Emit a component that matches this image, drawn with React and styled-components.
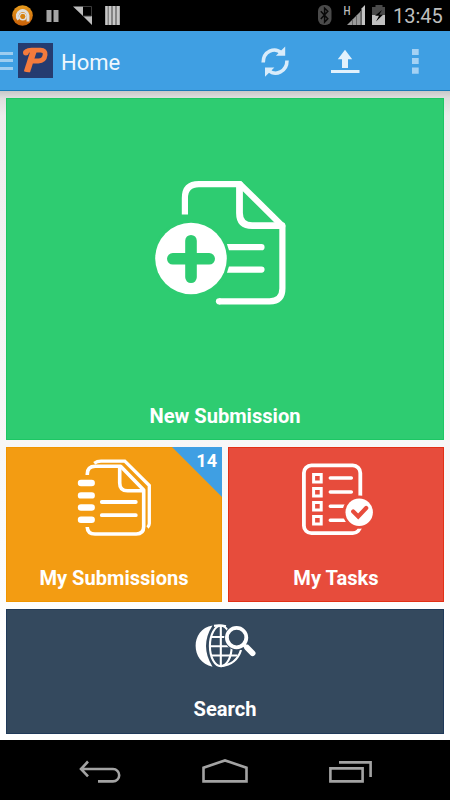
import React from 'react';
import styled, { createGlobalStyle } from 'styled-components';

const GlobalStyle = createGlobalStyle`
  * {
    box-sizing: border-box;
  }

  body {
    margin: 0;
    background: #000;
    font-family: Roboto, 'Noto Sans', sans-serif;
  }
`;

const Screen = styled.div`
  width: 450px;
  height: 800px;
  display: flex;
  flex-direction: column;
  overflow: hidden;
  background: #000;
`;

const StatusBar = styled.div`
  height: 31px;
  flex: none;
  display: flex;
  align-items: center;
  justify-content: space-between;
  background: #000;
`;

const StatusIcons = styled.svg`
  display: block;
  height: 31px;
  width: ${props => props.$width}px;
`;

const StatusRight = styled.div`
  display: flex;
  align-items: center;
  padding-right: 7px;
`;

const Clock = styled.span`
  width: 50px;
  font-size: 20px;
  line-height: 31px;
  padding-top: 2px;
  color: #bebebe;
  white-space: nowrap;
`;

const ActionBar = styled.header`
  height: 60px;
  flex: none;
  display: flex;
  align-items: center;
  background: #3f9fe3;
  border-bottom: 1px solid #1a7ab8;
`;

const DrawerHandle = styled.div`
  width: 13px;
  height: 18px;
  margin-right: 5px;
  display: flex;
  flex-direction: column;
  justify-content: space-between;
`;

const DrawerLine = styled.span`
  height: 3px;
  background: #9dcdf0;
`;

const Logo = styled.svg`
  width: 35px;
  height: 35px;
  display: block;
`;

const Title = styled.h1`
  margin: 0 0 0 8px;
  padding-top: 4px;
  flex: 1;
  font-size: 22px;
  font-weight: 400;
  line-height: 30px;
  color: #eff7fd;
`;

const ActionIcon = styled.svg`
  width: 70px;
  height: 59px;
  display: block;
  flex: none;
`;

const Content = styled.main`
  height: 649px;
  flex: none;
  padding: 7px 6px 6px;
  display: grid;
  grid-template-columns: 216px 216px;
  grid-template-rows: 342px 155px 125px;
  gap: 7px 6px;
  background: linear-gradient(#c8c8c8 0, #dedede 7px, #ececec 25px, #f3f3f3 200px, #f7f7f7 350px, #fff 560px);
`;

const Tile = styled.section`
  position: relative;
  grid-column: ${props => (props.$wide ? '1 / -1' : 'auto')};
  padding-top: ${props => props.$top}px;
  display: flex;
  flex-direction: column;
  align-items: center;
  background: ${props => props.$color};
  box-shadow: inset 0 0 0 1px ${props => props.$edge};
`;

const TileIcon = styled.svg`
  display: block;
  flex: none;
  transform: translateX(${props => props.$shift || 0}px);
`;

const TileLabel = styled.h2`
  margin: auto 0 ${props => props.$bottom || 11}px;
  font-size: 20.1px;
  font-weight: 700;
  line-height: 26px;
  color: #fff;
  white-space: nowrap;
`;

const CornerBadge = styled.div`
  position: absolute;
  top: 0;
  right: 0;
  width: 50px;
  height: 50px;
  padding: 4px 5px 0 0;
  font-size: 18px;
  font-weight: 700;
  line-height: 20px;
  text-align: right;
  color: #fff;
  background: #3f9fe3;
  clip-path: polygon(0 0, 100% 0, 100% 100%);
`;

const NavBar = styled.nav`
  height: 60px;
  flex: none;
  padding: 0 37px;
  display: grid;
  grid-template-columns: repeat(3, 1fr);
  background: #000;
`;

const NavButton = styled.button`
  padding: 0;
  border: none;
  background: none;
  display: flex;
  align-items: center;
  justify-content: center;
`;

const NavIcon = styled.svg`
  width: 60px;
  height: 60px;
  fill: none;
  stroke: #a3a3a3;
  stroke-width: 2.6;
`;

const NotificationIcons = () => (
  <StatusIcons $width={130} viewBox="0 0 130 31">
    <defs>
      <linearGradient id="ball" x1="0" y1="0" x2="0" y2="1">
        <stop offset="0" stopColor="#e79b1c" />
        <stop offset="1" stopColor="#c85f08" />
      </linearGradient>
    </defs>
    <circle cx="22.5" cy="15.5" r="10.3" fill="url(#ball)" />
    <path d="M18.6 19.6A5.4 5.4 0 1 1 28 15.4V21.4" fill="none" stroke="#dedede" strokeWidth="2.9" />
    <circle cx="22.8" cy="16.6" r="3.2" fill="none" stroke="#dedede" strokeWidth="1.5" />
    <circle cx="22.8" cy="16.4" r="2.4" fill="#d5810f" />
    <path d="M46.5 10h5v12h-5zM53.5 10h5v12h-5z" fill="#a5a5a5" />
    <path d="M73 6.5H83V16zM83 16h9v9z" fill="#bdbdbd" />
    <path d="M83 6.5h8.5V16H83" fill="none" stroke="#3c3c3c" />
    <path d="M105 6h15v19h-15z" fill="#858585" />
    <path d="M105.5 6h2v19h-2zM109 6h2v19h-2zM113 6h2v19h-2zM117 6h2.5v19H117z" fill="#c8c8c8" />
  </StatusIcons>
);

const SystemIcons = () => (
  <StatusIcons $width={76} viewBox="317 0 76 31">
    <rect x="318" y="5" width="13.5" height="20" rx="6" fill="#4a4a4a" />
    <path d="M320.8 11.2l7 7.5-3.2 3.4V8.2l3.2 3-7 7.8" fill="none" stroke="#080808" strokeWidth="1.5" />
    <text x="343.4" y="14.8" fontSize="12" fontFamily="Roboto" fontWeight="500" fill="#bdbdbd" textLength="7" lengthAdjust="spacingAndGlyphs">H</text>
    <path d="M347 25L361 11V25z" fill="#9a9a9a" />
    <path d="M361.5 8.5L365 5v20h-3.5z" fill="#c4c4c4" />
    <path d="M356.5 15.5V25M352.5 19.5V25M360.7 11V25" stroke="#666" strokeWidth="1" />
    <path d="M375.5 5h7v2h2.5v8h-13V7h3.5z" fill="#4a4a4a" />
    <path d="M372 15h13v10h-13z" fill="#c0c0c0" />
    <path d="M382 10l-7 5.8h4l-3 5.8 7-6.8h-3.8z" fill="#000" />
  </StatusIcons>
);

const AppLogo = () => (
  <Logo viewBox="0 0 35 35">
    <rect width="35" height="35" fill="#253c70" />
    <g fill="none" stroke="#f47b3c">
      <path d="M8 8.6Q10 7.2 13.5 7.2H22.6Q27.6 7.2 27.1 11.8 26.4 18 20.4 18H14.5" strokeWidth="4.8" />
      <path d="M15.6 8L8.8 29.3" strokeWidth="6.2" />
    </g>
    <circle cx="7.9" cy="9.6" r="2.9" fill="#f47b3c" />
    <path d="M0 29.3h20V35H0z" fill="#253c70" />
  </Logo>
);

const RefreshIcon = () => (
  <ActionIcon viewBox="240 31 70 59">
    <g fill="none" stroke="#d9ecfa" strokeWidth="3.6">
      <path d="M263.2 62.6C263.2 51.5 274.5 46.5 281.6 53.1" />
      <path d="M287 60.6C287 71.5 275.7 76.8 268.6 70.2" />
    </g>
    <path d="M285.2 46.5v9.2h-9.3zM265 76.8v-9.3h9.4z" fill="#d9ecfa" />
  </ActionIcon>
);

const UploadIcon = () => (
  <ActionIcon viewBox="310 31 70 59">
    <path d="M345 49.8l7.2 9.5H348v8.6h-6v-8.6h-4.2zM331 70h28.5v3H331z" fill="#e2f1fc" />
  </ActionIcon>
);

const OverflowIcon = () => (
  <ActionIcon viewBox="380 31 70 59">
    <path d="M412 49h6.7v6H412zM412 58h6.7v6H412zM412 67.5h6.7v6.3H412z" fill="#a4d1f3" />
  </ActionIcon>
);

const NewSubmissionIcon = () => (
  <TileIcon $shift={-4} width="134" height="126" viewBox="154 180 134 126">
    <g fill="none" stroke="#fff" strokeWidth="6.2" strokeLinecap="round" strokeLinejoin="round">
      <path strokeLinecap="butt" d="M184.9 214.5V198q0-13.9 13.9-13.9H240L282.4 226V288.5q0 12.8-12.8 12.8H219" />
      <path d="M239.5 184.5V213q0 12.7 12.7 12.7H282" strokeWidth="6.8" />
      <path d="M226 247.2h35.5M226 269.6h35.5" />
    </g>
    <circle cx="219" cy="301.3" r="3.1" fill="#fff" />
    <circle cx="191" cy="258.5" r="38.8" fill="#2ecc71" />
    <circle cx="191" cy="258.5" r="35.8" fill="#fff" />
    <path d="M191 240.7V277.3M172.8 258.8h36.4" stroke="#2ecc71" strokeWidth="11.6" strokeLinecap="round" />
  </TileIcon>
);

const MySubmissionsIcon = () => (
  <TileIcon width="76" height="78" viewBox="76 459 76 78">
    <g fill="none" stroke="#fff" strokeLinejoin="round">
      <path strokeWidth="3.6" d="M87.3 475V474q0-7.8 8-7.8H120.6L143.7 490V526.5q0 7.5-7.5 7.5H95q-7.5 0-7.8-7" />
      <path strokeWidth="3.6" d="M119.7 467V483q0 7.8 7.8 7.8H143" />
      <path strokeWidth="3.3" d="M94.2 463.3Q97 461.2 101 461.2H124.8L149.3 485.5V523.5Q149.2 526 147.5 527.5" strokeLinejoin="miter" />
      <path strokeWidth="3.8" strokeLinecap="round" d="M101.8 502h34M101.8 515.2h34" />
      <path strokeWidth="6.4" strokeLinecap="round" d="M81 483h10.7M81 495.4h10.7M81 507.5h10.7M81 519.8h10.7" />
    </g>
  </TileIcon>
);

const MyTasksIcon = () => (
  <TileIcon $shift={2} width="74" height="74" viewBox="301 462 74 74">
    <g fill="none" stroke="#fff" strokeWidth="3.8">
      <rect x="303.9" y="465.4" width="56.4" height="67.8" rx="7.5" />
      <path strokeWidth="3" d="M313.6 474.5h7.6v7.6h-7.6zM313.6 488.5h7.6v7.6h-7.6zM313.6 502.5h7.6v7.6h-7.6zM313.6 516.4h7.6v7.6h-7.6z" />
      <path strokeWidth="3.5" strokeLinecap="round" d="M330.3 477.9h21M330.3 492.1h21M330.3 506.3h17M330.3 520.2h17" />
    </g>
    <circle cx="359.2" cy="512.2" r="16.6" fill="#e74c3c" />
    <circle cx="359.2" cy="512.2" r="13.7" fill="#fff" />
    <path d="M353.2 511.5l5 5 8-8.5" fill="none" stroke="#e74c3c" strokeWidth="4.2" strokeLinecap="round" />
  </TileIcon>
);

const SearchIcon = () => (
  <TileIcon $shift={1} width="62" height="44" viewBox="195 624 62 44">
    <path d="M212.5 625.5C190 629 190 662.5 212.5 666.7Q199.5 646 212.5 625.5z" fill="#fff" />
    <g fill="none" stroke="#fff" strokeWidth="2.1">
      <ellipse cx="220.8" cy="646" rx="10.9" ry="20.2" />
      <path d="M220.8 626V666M211.5 637h20M210 646.3h32M211.5 655.5h26" />
      <path d="M214 625.8Q220 624.8 226 626.2M241 650Q236.5 664.5 221 666.2" strokeWidth="2.2" />
    </g>
    <circle cx="236.8" cy="637.6" r="12.6" fill="#34495e" />
    <path d="M244.5 645.3l9 8.5" stroke="#34495e" strokeWidth="9" />
    <circle cx="236.6" cy="637.6" r="9.7" fill="none" stroke="#fff" strokeWidth="3.8" />
    <path d="M243 643.8l3.5 3.5" stroke="#fff" strokeWidth="3.8" />
    <path d="M247.2 647.7l5.4 5.5" stroke="#fff" strokeWidth="5.8" strokeLinecap="round" />
  </TileIcon>
);

const App = () => (
  <Screen>
    <GlobalStyle />
    <StatusBar>
      <NotificationIcons />
      <StatusRight>
        <SystemIcons />
        <Clock>13:45</Clock>
      </StatusRight>
    </StatusBar>

    <ActionBar>
      <DrawerHandle>
        <DrawerLine />
        <DrawerLine />
        <DrawerLine />
      </DrawerHandle>
      <AppLogo />
      <Title>Home</Title>
      <RefreshIcon />
      <UploadIcon />
      <OverflowIcon />
    </ActionBar>

    <Content>
      <Tile $wide $top={82} $color="#2ecc71" $edge="#1cc764">
        <NewSubmissionIcon />
        <TileLabel>New Submission</TileLabel>
      </Tile>
      <Tile $top={12} $color="#f39c12" $edge="#f09500">
        <MySubmissionsIcon />
        <CornerBadge>14</CornerBadge>
        <TileLabel>My Submissions</TileLabel>
      </Tile>
      <Tile $top={15} $color="#e74c3c" $edge="#e23016">
        <MyTasksIcon />
        <TileLabel>My Tasks</TileLabel>
      </Tile>
      <Tile $wide $top={15} $color="#34495e" $edge="#203a59">
        <SearchIcon />
        <TileLabel $bottom={12}>Search</TileLabel>
      </Tile>
    </Content>

    <NavBar>
      <NavButton>
        <NavIcon viewBox="70 740 60 60">
          <path d="M81 769H113a6.2 6.2 0 0 1 0 12.4H98M88 761.5l-7 7.5 7 7.3" />
        </NavIcon>
      </NavButton>
      <NavButton>
        <NavIcon viewBox="195 740 60 60">
          <path d="M203.5 781.4V767.7L225 760.4 246.5 767.7V781.4z" />
        </NavIcon>
      </NavButton>
      <NavButton>
        <NavIcon viewBox="321 740 60 60">
          <path d="M331.4 768.4h32.2v13h-32.2zM340 762.4h31.6V777" />
        </NavIcon>
      </NavButton>
    </NavBar>
  </Screen>
);

export default App;
